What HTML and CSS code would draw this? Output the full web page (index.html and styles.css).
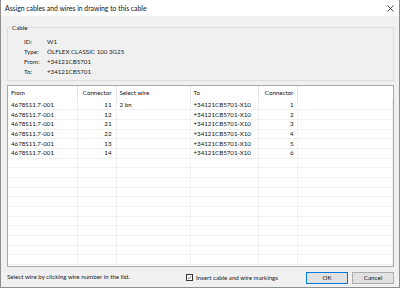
FILE: index.html
```html
<!DOCTYPE html>
<html>
<head>
<meta charset="utf-8">
<link rel="stylesheet" href="styles.css">
</head>
<body>
<div class="window">
  <div class="titlebar">
    <span class="title">Assign cables and wires in drawing to this cable</span>
    <svg class="close" width="7" height="7" viewBox="0 0 7 7"><path d="M0.5 0.5L6.5 6.5M6.5 0.5L0.5 6.5" stroke="#333" stroke-width="0.9" fill="none"/></svg>
  </div>
  <div class="content">
    <fieldset class="group">
      <legend>Cable</legend>
      <div class="props">
        <span class="lbl">ID:</span><span>W1</span>
        <span class="lbl">Type:</span><span>ÖLFLEX CLASSIC 100 3G25</span>
        <span class="lbl">From:</span><span>+34121CB5701</span>
        <span class="lbl">To:</span><span>+34121CB5701</span>
      </div>
    </fieldset>
    <div class="list">
      <table class="grid">
        <colgroup>
          <col class="c1"><col class="c2"><col class="c3"><col class="c4"><col class="c5"><col>
        </colgroup>
        <thead>
          <tr><th>From</th><th class="num">Connector</th><th>Select wire</th><th>To</th><th class="num n2">Connector</th><th class="fill"></th></tr>
        </thead>
        <tbody>
          <tr><td>4678S11.7-001</td><td class="num">11</td><td>2 bn</td><td>+34121CB5701-X10</td><td class="num n2">1</td><td></td></tr>
          <tr><td>4678S11.7-001</td><td class="num">12</td><td></td><td>+34121CB5701-X10</td><td class="num n2">2</td><td></td></tr>
          <tr><td>4678S11.7-001</td><td class="num">21</td><td></td><td>+34121CB5701-X10</td><td class="num n2">3</td><td></td></tr>
          <tr><td>4678S11.7-001</td><td class="num">22</td><td></td><td>+34121CB5701-X10</td><td class="num n2">4</td><td></td></tr>
          <tr><td>4678S11.7-001</td><td class="num">13</td><td></td><td>+34121CB5701-X10</td><td class="num n2">5</td><td></td></tr>
          <tr><td>4678S11.7-001</td><td class="num">14</td><td></td><td>+34121CB5701-X10</td><td class="num n2">6</td><td></td></tr>
          <tr><td></td><td></td><td></td><td></td><td></td><td></td></tr>
          <tr><td></td><td></td><td></td><td></td><td></td><td></td></tr>
          <tr><td></td><td></td><td></td><td></td><td></td><td></td></tr>
          <tr><td></td><td></td><td></td><td></td><td></td><td></td></tr>
          <tr><td></td><td></td><td></td><td></td><td></td><td></td></tr>
          <tr><td></td><td></td><td></td><td></td><td></td><td></td></tr>
          <tr><td></td><td></td><td></td><td></td><td></td><td></td></tr>
          <tr><td></td><td></td><td></td><td></td><td></td><td></td></tr>
          <tr><td></td><td></td><td></td><td></td><td></td><td></td></tr>
          <tr><td></td><td></td><td></td><td></td><td></td><td></td></tr>
          <tr><td></td><td></td><td></td><td></td><td></td><td></td></tr>
          <tr><td></td><td></td><td></td><td></td><td></td><td></td></tr>
          <tr><td></td><td></td><td></td><td></td><td></td><td></td></tr>
        </tbody>
      </table>
    </div>
    <div class="footer">
      <span class="hint">Select wire by clicking wire number in the list.</span>
      <label class="check">
        <span class="box"><svg width="7" height="7" viewBox="0 0 7 7"><path d="M1 3.6L2.8 5.4L6 1.4" stroke="#222" stroke-width="0.8" fill="none"/></svg></span>
        <span>Insert cable and wire markings</span>
      </label>
      <button class="btn ok">OK</button>
      <button class="btn">Cancel</button>
    </div>
  </div>
</div>
</body>
</html>
```

FILE: styles.css
```css
html, body {
  margin: 0;
  padding: 0;
  background: #ffffff;
}
body {
  font-family: Lato, "Liberation Sans", sans-serif;
  font-size: 6.2px;
  color: #000;
}
.window {
  width: 400px;
  height: 288px;
  box-sizing: border-box;
  border: 1px solid #8f8f8f;
  border-top: none;
  background: #f0f0f0;
  display: flex;
  flex-direction: column;
}
.titlebar {
  height: 16px;
  background: #fff;
  display: flex;
  align-items: center;
  justify-content: space-between;
  padding: 0 5px 0 4px;
  font-size: 6.85px;
}
.title {
  color: #111;
}
.close {
  display: block;
}
.content {
  flex: 1;
  display: flex;
  flex-direction: column;
  padding: 0 5px 0 6px;
}
.group {
  margin: 7px 0 0 0;
  padding: 4px 4px 4px 3px;
  border: 1px solid #dcdcdc;
  min-width: 0;
}
.group legend {
  padding: 0 1px;
  line-height: 9px;
  color: #111;
}
.props {
  display: grid;
  grid-template-columns: 23px auto;
  grid-auto-rows: 10px;
  align-items: center;
  padding-left: 13px;
  color: #222;
}
.list {
  margin-top: 4px;
  height: 182px;
  box-sizing: border-box;
  border: 1px solid #a9a9a9;
  background: #fff;
  overflow: hidden;
}
.grid {
  border-collapse: collapse;
  table-layout: fixed;
  width: 100%;
}
.c1 { width: 69px; }
.c2 { width: 39px; }
.c3 { width: 74px; }
.c4 { width: 68px; }
.c5 { width: 39px; }
.grid th {
  height: 13.7px;
  padding: 0 0 0 3px;
  font-weight: normal;
  text-align: left;
  border-right: 1px solid #e5e5e5;
  color: #111;
}
.grid th.fill {
  border-right: none;
}
.grid td {
  height: 8.67px;
  padding: 0 0 0 3px;
  border-right: 1px solid #f0f0f0;
  border-top: 1px solid #f0f0f0;
  white-space: nowrap;
  overflow: hidden;
  line-height: 8px;
  color: #111;
}
.grid tbody tr:first-child td {
  border-top: none;
  height: 9.67px;
}
.grid .num {
  text-align: right;
  padding: 0 4px 0 0;
}
.grid .n2 {
  padding-right: 3px;
}
.footer {
  flex: 1;
  display: flex;
  align-items: center;
  padding-top: 1px;
}
.hint {
  flex: 1;
  color: #222;
  margin-top: -2px;
}
.check {
  display: flex;
  align-items: center;
  gap: 3px;
  margin-right: 24px;
  color: #222;
}
.box {
  width: 7px;
  height: 7px;
  box-sizing: border-box;
  border: 1px solid #333;
  background: #fff;
  display: flex;
  align-items: center;
  justify-content: center;
}
.box svg {
  display: block;
}
.btn {
  width: 42px;
  height: 12px;
  margin: 0 0 0 4px;
  padding: 0;
  box-sizing: border-box;
  border: 1px solid #adadad;
  background: #e1e1e1;
  font-family: inherit;
  font-size: 6.2px;
  color: #111;
}
.btn.ok {
  border-color: #0078d7;
}
```
